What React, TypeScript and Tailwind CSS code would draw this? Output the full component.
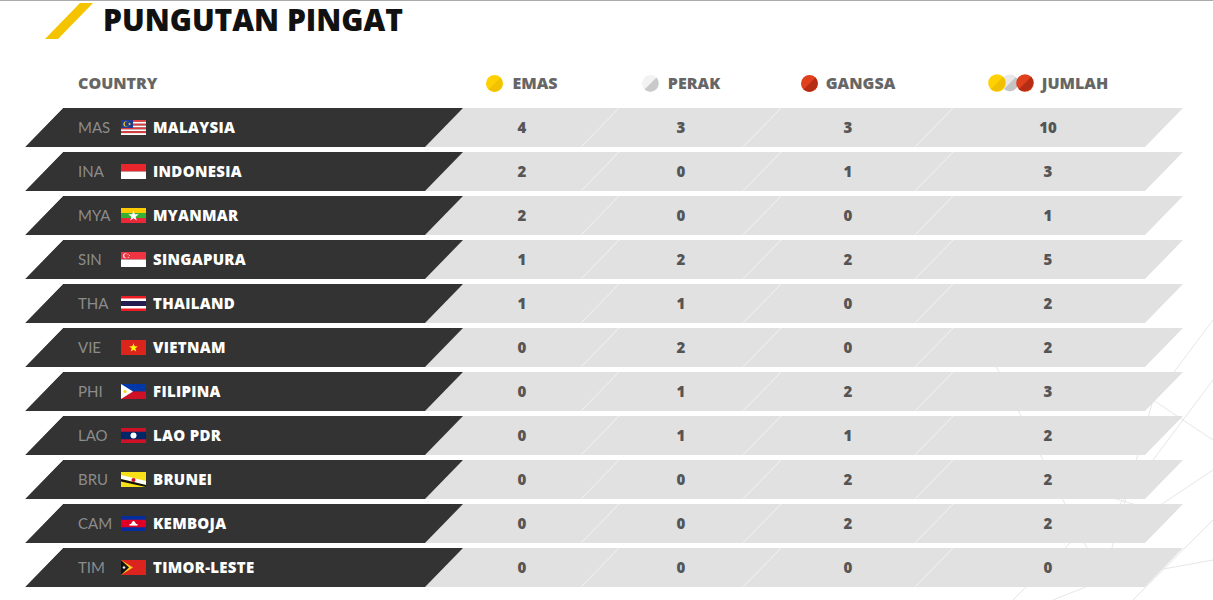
import React from "react";

type Row = { code: string; name: string; flag: string; g: number; s: number; b: number; t: number };

const rows: Row[] = [
  { code: "MAS", name: "MALAYSIA", flag: "mas", g: 4, s: 3, b: 3, t: 10 },
  { code: "INA", name: "INDONESIA", flag: "ina", g: 2, s: 0, b: 1, t: 3 },
  { code: "MYA", name: "MYANMAR", flag: "mya", g: 2, s: 0, b: 0, t: 1 },
  { code: "SIN", name: "SINGAPURA", flag: "sin", g: 1, s: 2, b: 2, t: 5 },
  { code: "THA", name: "THAILAND", flag: "tha", g: 1, s: 1, b: 0, t: 2 },
  { code: "VIE", name: "VIETNAM", flag: "vie", g: 0, s: 2, b: 0, t: 2 },
  { code: "PHI", name: "FILIPINA", flag: "phi", g: 0, s: 1, b: 2, t: 3 },
  { code: "LAO", name: "LAO PDR", flag: "lao", g: 0, s: 1, b: 1, t: 2 },
  { code: "BRU", name: "BRUNEI", flag: "bru", g: 0, s: 0, b: 2, t: 2 },
  { code: "CAM", name: "KEMBOJA", flag: "cam", g: 0, s: 0, b: 2, t: 2 },
  { code: "TIM", name: "TIMOR-LESTE", flag: "tim", g: 0, s: 0, b: 0, t: 0 },
];

function Star({ cx, cy, r, fill }: { cx: number; cy: number; r: number; fill: string }) {
  const pts: string[] = [];
  for (let i = 0; i < 10; i++) {
    const a = -Math.PI / 2 + (i * Math.PI) / 5;
    const rr = i % 2 === 0 ? r : r * 0.4;
    pts.push(`${cx + rr * Math.cos(a)},${cy + rr * Math.sin(a)}`);
  }
  return <polygon points={pts.join(" ")} fill={fill} />;
}

function Flag({ id }: { id: string }) {
  let body: React.ReactNode = null;
  switch (id) {
    case "mas":
      body = (
        <>
          {[0, 1, 2, 3, 4, 5, 6, 7].map((i) => (
            <rect key={i} x="0" y={i * 1.875} width="25" height="1.875" fill={i % 2 === 0 ? "#e03a3e" : "#fff"} />
          ))}
          <rect x="0" y="0" width="12" height="8" fill="#1f3a93" />
          <circle cx="5" cy="4" r="2.6" fill="#f7d117" />
          <circle cx="5.8" cy="4" r="2.2" fill="#1f3a93" />
          <Star cx={8.6} cy={4} r={1.6} fill="#f7d117" />
        </>
      );
      break;
    case "ina":
      body = (
        <>
          <rect width="25" height="7.5" fill="#e8262b" />
          <rect y="7.5" width="25" height="7.5" fill="#fff" />
        </>
      );
      break;
    case "mya":
      body = (
        <>
          <rect width="25" height="5" fill="#fecb00" />
          <rect y="5" width="25" height="5" fill="#34b233" />
          <rect y="10" width="25" height="5" fill="#ea2839" />
          <Star cx={12.5} cy={8} r={5.5} fill="#fff" />
        </>
      );
      break;
    case "sin":
      body = (
        <>
          <rect width="25" height="7.5" fill="#ef3340" />
          <rect y="7.5" width="25" height="7.5" fill="#fff" />
          <circle cx="4.5" cy="3.8" r="2.5" fill="#fff" />
          <circle cx="5.5" cy="3.8" r="2.3" fill="#ef3340" />
          <circle cx="7" cy="2.5" r="0.5" fill="#fff" />
          <circle cx="8.5" cy="3.6" r="0.5" fill="#fff" />
          <circle cx="7.6" cy="5.2" r="0.5" fill="#fff" />
        </>
      );
      break;
    case "tha":
      body = (
        <>
          <rect width="25" height="15" fill="#ed1c24" />
          <rect y="2.5" width="25" height="10" fill="#fff" />
          <rect y="5" width="25" height="5" fill="#241d4f" />
        </>
      );
      break;
    case "vie":
      body = (
        <>
          <rect width="25" height="15" fill="#da251d" />
          <Star cx={12.5} cy={7.8} r={4.6} fill="#ffff00" />
        </>
      );
      break;
    case "phi":
      body = (
        <>
          <rect width="25" height="7.5" fill="#0038a8" />
          <rect y="7.5" width="25" height="7.5" fill="#ce1126" />
          <polygon points="0,0 12,7.5 0,15" fill="#fff" />
          <circle cx="4" cy="7.5" r="1.6" fill="#fcd116" />
        </>
      );
      break;
    case "lao":
      body = (
        <>
          <rect width="25" height="15" fill="#ce1126" />
          <rect y="3.75" width="25" height="7.5" fill="#002868" />
          <circle cx="12.5" cy="7.5" r="3" fill="#fff" />
        </>
      );
      break;
    case "bru":
      body = (
        <>
          <rect width="25" height="15" fill="#f7e017" />
          <polygon points="0,3 0,7 25,13 25,9" fill="#fff" />
          <polygon points="0,7 0,9.5 25,15 25,13" fill="#111" />
          <circle cx="12.5" cy="8" r="2" fill="#cf1126" />
        </>
      );
      break;
    case "cam":
      body = (
        <>
          <rect width="25" height="15" fill="#032ea1" />
          <rect y="3.75" width="25" height="7.5" fill="#e00025" />
          <rect x="8.5" y="8" width="8" height="1.6" fill="#fff" />
          <polygon points="10,8 11,6 12.5,4.8 14,6 15,8" fill="#fff" />
        </>
      );
      break;
    case "tim":
      body = (
        <>
          <rect width="25" height="15" fill="#dc241f" />
          <polygon points="0,0 12,7.5 0,15" fill="#ffc726" />
          <polygon points="0,0 8,7.5 0,15" fill="#111" />
          <Star cx={3} cy={7.5} r={2} fill="#fff" />
        </>
      );
      break;
  }
  return (
    <svg width="25" height="15" viewBox="0 0 25 15" className="shrink-0">
      {body}
    </svg>
  );
}

function Medal({ kind }: { kind: "gold" | "silver" | "bronze" }) {
  const c = {
    gold: ["#ffd100", "#f2c200"],
    silver: ["#f2f2f2", "#c9c9c9"],
    bronze: ["#e0401c", "#b52d14"],
  }[kind];
  return (
    <svg width="17" height="17" viewBox="0 0 17 17" className="shrink-0">
      <circle cx="8.5" cy="8.5" r="8.5" fill={c[0]} />
      <path d="M14.5 2.5 A8.5 8.5 0 0 1 2.5 14.5 Z" fill={c[1]} />
    </svg>
  );
}

function MedalStack() {
  return (
    <svg width="47" height="18" viewBox="0 0 47 18" className="shrink-0">
      <circle cx="22" cy="9" r="8.5" fill="#e8e8e8" />
      <path d="M28 3 A8.5 8.5 0 0 1 16 15 Z" fill="#c4c4c4" />
      <circle cx="9" cy="9" r="8.8" fill="#ffd100" />
      <path d="M15.2 2.8 A8.8 8.8 0 0 1 2.8 15.2 Z" fill="#f0c000" />
      <circle cx="37" cy="9" r="8.8" fill="#e0401c" />
      <path d="M43.2 2.8 A8.8 8.8 0 0 1 30.8 15.2 Z" fill="#b52d14" />
    </svg>
  );
}

const rowClip = "[clip-path:polygon(38px_0,100%_0,calc(100%_-_38px)_100%,0_100%)]";
const heavy = "font-['Open_Sans',Lato,sans-serif] font-extrabold";

export default function App() {
  return (
    <div
      className="relative h-[600px] w-[1213px] overflow-hidden border-t border-[#aaaaaa] bg-white"
      style={{ fontFamily: "Lato, 'Open Sans', Arial, sans-serif" }}
    >
      {/* faint background sketch */}
      <svg
        className="absolute bottom-0 right-0"
        width="260"
        height="320"
        viewBox="0 0 260 320"
        fill="none"
        stroke="#e6e6e6"
        strokeWidth="1"
      >
        <polyline points="260,40 200,120 150,300 100,320" />
        <polyline points="30,60 150,300 260,280" />
        <polyline points="200,120 260,160" />
        <polyline points="100,200 200,230 260,190" />
        <polyline points="140,260 260,100" />
        <polyline points="180,320 260,240" />
        <polyline points="60,320 130,250" />
      </svg>

      {/* title */}
      <div className="relative flex h-[62px] items-start pl-[44px] pt-[2px]">
        <svg width="50" height="36" viewBox="0 0 50 36" className="shrink-0">
          <polygon points="36,0 49,0 14,36 1,36" fill="#f5c400" />
        </svg>
        <h1 className={`ml-[9px] -mt-[3px] text-[30px] leading-[40px] text-[#111] ${heavy}`}>
          PUNGUTAN PINGAT
        </h1>
      </div>

      {/* header row */}
      <div className={`relative ml-[25px] flex h-[40px] w-[1158px] items-center text-[16px] text-[#666] ${heavy}`}>
        <div className="flex w-[438px] shrink-0 items-center pl-[53px]">COUNTRY</div>
        <div className="-ml-[19px] flex">
          <div className="flex w-[156px] items-center justify-center gap-[9px]">
            <Medal kind="gold" />
            <span>EMAS</span>
          </div>
          <div className="flex w-[162px] items-center justify-center gap-[9px]">
            <Medal kind="silver" />
            <span>PERAK</span>
          </div>
          <div className="flex w-[172px] items-center justify-center gap-[8px]">
            <Medal kind="bronze" />
            <span>GANGSA</span>
          </div>
          <div className="flex w-[228px] items-center justify-center gap-[7px]">
            <MedalStack />
            <span>JUMLAH</span>
          </div>
        </div>
      </div>

      {/* table rows */}
      <div className="relative mt-[5px] flex flex-col gap-[5px]">
        {rows.map((r) => (
          <div key={r.code} className={`relative ml-[25px] flex h-[39px] w-[1158px] bg-[#e1e1e1] ${rowClip}`}>
            <svg className="absolute inset-0" width="1158" height="39" stroke="#f2f2f2" strokeWidth="1">
              <line x1="594" y1="0" x2="556" y2="39" />
              <line x1="756" y1="0" x2="718" y2="39" />
              <line x1="928" y1="0" x2="890" y2="39" />
            </svg>
            <div className={`relative flex w-[438px] shrink-0 items-center bg-[#333333] pl-[53px] text-[15px] ${rowClip}`}>
              <span className="w-[43px] font-normal text-[#8c8c8c]">{r.code}</span>
              <Flag id={r.flag} />
              <span className={`ml-[7px] tracking-[0.3px] text-white ${heavy}`}>{r.name}</span>
            </div>
            <div className={`relative -ml-[19px] flex text-[15px] text-[#555] ${heavy}`}>
              <div className="flex w-[156px] items-center justify-center">{r.g}</div>
              <div className="flex w-[162px] items-center justify-center">{r.s}</div>
              <div className="flex w-[172px] items-center justify-center">{r.b}</div>
              <div className="flex w-[228px] items-center justify-center">{r.t}</div>
            </div>
          </div>
        ))}
      </div>
    </div>
  );
}
